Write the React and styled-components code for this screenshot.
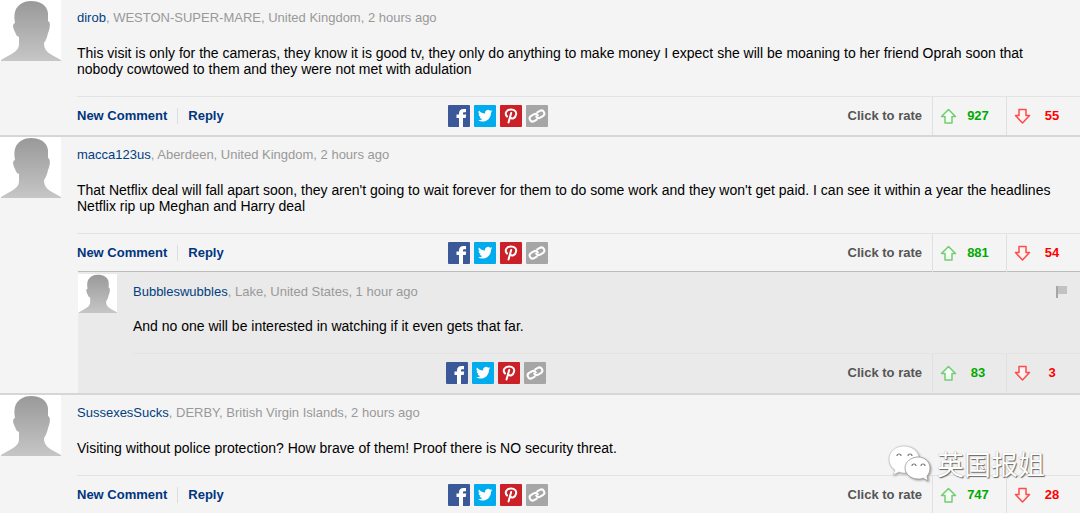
import React from 'react';
import styled, { createGlobalStyle } from 'styled-components';

const GlobalStyle = createGlobalStyle`
  * { box-sizing: border-box; }
  body {
    margin: 0;
    background: #f4f4f4;
    font-family: "Liberation Sans", Arial, "Noto Sans CJK SC", sans-serif;
    font-size: 13px;
    line-height: 16px;
    color: #000;
  }
`;

const Page = styled.main`
  position: relative;
  overflow: hidden;
`;

const Comment = styled.article`
  display: flex;
  align-items: flex-start;
  gap: 16px;
`;

const ReplyComment = styled(Comment)`
  margin: -1px 0 0 78px;
  padding-bottom: 1px;
  background: #eaeaea;
  border-top: 1px solid #bcbcbc;
`;

const Thread = styled.section`
  border-bottom: ${(p) => (p.$last ? '0' : '2px solid #d6d6d6')};
`;

const AvatarFrame = styled.svg`
  display: block;
  flex: none;
  width: ${(p) => p.$size}px;
  height: ${(p) => p.$size}px;
  margin-top: ${(p) => p.$top}px;
`;

const Content = styled.div`
  flex: 1;
  min-width: 0;
`;

const Meta = styled.header`
  display: flex;
  justify-content: space-between;
  padding: ${(p) => (p.$nested ? '12px 12px 0 0' : '10px 12px 0 0')};
  color: #999;
`;

const UserLink = styled.a`
  color: #004080;
  text-decoration: none;
`;

const Message = styled.p`
  margin: 0;
  padding: ${(p) => (p.$nested ? '18px 10px 19px 0' : '19px 10px 19px 0')};
  font-size: 14px;
`;

const Footer = styled.footer`
  display: flex;
  align-items: center;
  height: 39px;
  border-top: 1px solid #e3e3e3;
  font-weight: bold;
`;

const Actions = styled.div`
  display: flex;
  flex: 0 0 ${(p) => (p.$nested ? '33%' : '37%')};
`;

const Action = styled.button`
  border: 0;
  padding: 0;
  background: none;
  font: inherit;
  color: #003580;
  cursor: pointer;

  & + & {
    margin-left: 10px;
    padding-left: 10px;
    border-left: 1px solid #ddd;
  }
`;

const Share = styled.div`
  display: flex;
  gap: 4px;
`;

const ShareLink = styled.a`
  display: block;
  width: 22px;
  height: 22px;
  background: ${(p) => p.$color};
  border-radius: 1px;

  svg { display: block; }
`;

const Rating = styled.div`
  display: flex;
  align-items: center;
  align-self: stretch;
  margin-left: auto;
  color: #555;
`;

const RateLabel = styled.span`
  padding-right: 10px;
`;

const Vote = styled.button`
  display: flex;
  align-items: center;
  align-self: stretch;
  width: 74px;
  padding: 0 0 0 7px;
  border: 0;
  border-left: 1px solid #e0e0e0;
  background: none;
  font: inherit;
  color: ${(p) => p.$color};
  cursor: pointer;

  span { flex: 1; padding-right: 7px; text-align: center; }
`;

const Flag = styled.button`
  border: 0;
  padding: 0;
  height: 16px;
  background: none;
  cursor: pointer;

  svg { display: block; }
`;

const Watermark = styled.div`
  position: absolute;
  right: 35px;
  bottom: 30px;
  display: flex;
  align-items: center;
  gap: 6px;
  color: #fff;
  font: 27px/40px "Noto Sans CJK SC", sans-serif;
  text-shadow: 1px 1px 1px #666, 0 0 1px #999;
  pointer-events: none;

  svg { display: block; filter: drop-shadow(1px 1px 1px #999); }
`;

function Avatar({ id, size, top }) {
  return (
    <AvatarFrame $size={size} $top={top} viewBox="0 0 61 61" role="img" aria-label="User avatar">
      <defs>
        <linearGradient id={id} x1="0" y1="0" x2="0" y2="1">
          <stop offset="0" stopColor="#999" />
          <stop offset="1" stopColor="#c6c6c6" />
        </linearGradient>
      </defs>
      <path fill="#fff" d="M0 0h61v61H0z" />
      <path
        fill={`url(#${id})`}
        d="M31 1C40 1 47 5 48 13L48 21C51 22 50 29 48 33C47 38 46 40 44 43C44 51 48 53 61 60V61H1V60C13 53 19 51 19 44V37C16 36 16 34 15 32C13 28 12 24 15 23C14 18 14 13 16 9C19 4 24 1 31 1Z"
      />
    </AvatarFrame>
  );
}

function ShareIcons() {
  return (
    <Share>
      <ShareLink href="#facebook" aria-label="Facebook" $color="#3b5998">
        <svg width="22" height="22" viewBox="0 0 22 22">
          <path fill="#fff" d="M11 22v-9H8.500V9.500H11V8.500C11 5.500 12.500 4 15.500 4H18v3.300h-1.500c-1.200 0-1.500.4-1.500 1.200v1h3.200l-.5 3.500H15v9z" />
        </svg>
      </ShareLink>
      <ShareLink href="#twitter" aria-label="Twitter" $color="#00acee">
        <svg width="22" height="22" viewBox="0 0 22 22">
          <g transform="translate(4 3.500) scale(.6)">
            <path fill="#fff" d="M23.950 4.570a10 10 0 0 1-2.820.770 4.960 4.960 0 0 0 2.160-2.720 9.900 9.900 0 0 1-3.120 1.190 4.920 4.920 0 0 0-8.380 4.480C7.690 8.090 4.070 6.130 1.640 3.160a4.920 4.920 0 0 0 1.520 6.570 4.900 4.900 0 0 1-2.230-.610v.060a4.920 4.920 0 0 0 3.950 4.830 5 5 0 0 1-2.210.080 4.940 4.940 0 0 0 4.600 3.420A9.870 9.870 0 0 1 0 19.540a13.990 13.990 0 0 0 7.550 2.210c9.050 0 14-7.500 14-13.980l-.020-.630a9.940 9.940 0 0 0 2.420-2.570z" />
          </g>
        </svg>
      </ShareLink>
      <ShareLink href="#pinterest" aria-label="Pinterest" $color="#cb2027">
        <svg width="22" height="22" viewBox="0 0 22 22" fill="none" stroke="#fff" strokeLinecap="round">
          <path strokeWidth="2" d="M7 11.500C4 8 7 4.500 11 4.500c4 0 5.800 2.500 5 5.200-.8 3.800-4.200 4.800-5.800 2.600" />
          <path strokeWidth="2" d="M11.200 8L8.500 17.500" />
        </svg>
      </ShareLink>
      <ShareLink href="#link" aria-label="Copy link" $color="#a6a6a6">
        <svg width="22" height="22" viewBox="0 0 22 22" fill="none" stroke="#fff" strokeWidth="2" strokeLinecap="round">
          <g transform="rotate(-30 11 11)">
            <path d="M9 14H6a3 3 0 0 1 0-6h3a3 3 0 0 1 3 3" />
            <path d="M13 8h3a3 3 0 0 1 0 6h-3a3 3 0 0 1-3-3" />
          </g>
        </svg>
      </ShareLink>
    </Share>
  );
}

function Arrow({ down }) {
  return (
    <svg width="17" height="17" viewBox="0 0 17 17" fill="none" strokeWidth="1.500" strokeLinejoin="round"
      stroke={down ? '#ff4b4b' : '#74cc74'} aria-hidden="true">
      <path
        fill={down ? '#fff3f3' : '#f4fff4'}
        d={down ? 'M5 1.500h7v6h3.500L8.500 15 1.500 7.500H5z' : 'M8.500 1.500l7 7H12v6.500H5V8.500H1.500z'}
      />
    </svg>
  );
}

function CommentBody({ comment, nested }) {
  const { user, details, text, up, down } = comment;
  return (
    <>
      <Avatar id={`avatar-${user}`} size={nested ? 39 : 61} top={nested ? 2 : 0} />
      <Content>
        <Meta $nested={nested}>
          <span><UserLink href="#user">{user}</UserLink>, {details}</span>
          {nested && (
            <Flag aria-label="Report comment">
              <svg width="13" height="14" viewBox="0 0 13 14">
                <path fill="#c2c2c2" d="M2 1h10v8H2z" />
                <path fill="#a6a6a6" d="M1 1h2v12H1z" />
              </svg>
            </Flag>
          )}
        </Meta>
        <Message $nested={nested}>{text}</Message>
        <Footer>
          <Actions $nested={nested}>
            {!nested && (
              <>
                <Action>New Comment</Action>
                <Action>Reply</Action>
              </>
            )}
          </Actions>
          <ShareIcons />
          <Rating>
            <RateLabel>Click to rate</RateLabel>
            <Vote $color="#0a0" aria-label={`Rate up, ${up}`}><Arrow /><span>{up}</span></Vote>
            <Vote $color="#f00" aria-label={`Rate down, ${down}`}><Arrow down /><span>{down}</span></Vote>
          </Rating>
        </Footer>
      </Content>
    </>
  );
}

const threads = [
  {
    user: 'dirob',
    details: 'WESTON-SUPER-MARE, United Kingdom, 2 hours ago',
    text: 'This visit is only for the cameras, they know it is good tv, they only do anything to make money I expect she will be moaning to her friend Oprah soon that nobody cowtowed to them and they were not met with adulation',
    up: 927,
    down: 55,
  },
  {
    user: 'macca123us',
    details: 'Aberdeen, United Kingdom, 2 hours ago',
    text: "That Netflix deal will fall apart soon, they aren't going to wait forever for them to do some work and they won't get paid. I can see it within a year the headlines Netflix rip up Meghan and Harry deal",
    up: 881,
    down: 54,
    reply: {
      user: 'Bubbleswubbles',
      details: 'Lake, United States, 1 hour ago',
      text: 'And no one will be interested in watching if it even gets that far.',
      up: 83,
      down: 3,
    },
  },
  {
    user: 'SussexesSucks',
    details: 'DERBY, British Virgin Islands, 2 hours ago',
    text: 'Visiting without police protection? How brave of them! Proof there is NO security threat.',
    up: 747,
    down: 28,
  },
];

export default function App() {
  return (
    <Page>
      <GlobalStyle />
      {threads.map((thread, i) => (
        <Thread key={thread.user} $last={i === threads.length - 1}>
          <Comment>
            <CommentBody comment={thread} />
          </Comment>
          {thread.reply && (
            <ReplyComment>
              <CommentBody comment={thread.reply} nested />
            </ReplyComment>
          )}
        </Thread>
      ))}
      <Watermark>
        <svg width="43" height="38" viewBox="0 0 43 38">
          <path fill="#fff" stroke="#bbb" strokeWidth=".6" d="M16 1C7 1 1 7 1 14c0 5 3 9 6 11l-2 5 6-3c2 1 5 1 7 1-2-9 5-16 13-16C30 6 24 1 16 1z" />
          <path fill="#fff" stroke="#999" strokeWidth=".8" d="M30 12c-7 0-13 5-13 11s6 11 13 11c2 0 4 0 5-1l5 3-1-5c2-2 3-5 3-8 0-6-5-11-12-11z" />
          <g fill="none" stroke="#777" strokeWidth="1.200">
            <path d="M9 11a2 2 0 0 1 4 0M20 11a2 2 0 0 1 4 0M24 21a2 2 0 0 1 4 0M33 21a2 2 0 0 1 4 0" />
          </g>
        </svg>
        <span>英国报姐</span>
      </Watermark>
    </Page>
  );
}
